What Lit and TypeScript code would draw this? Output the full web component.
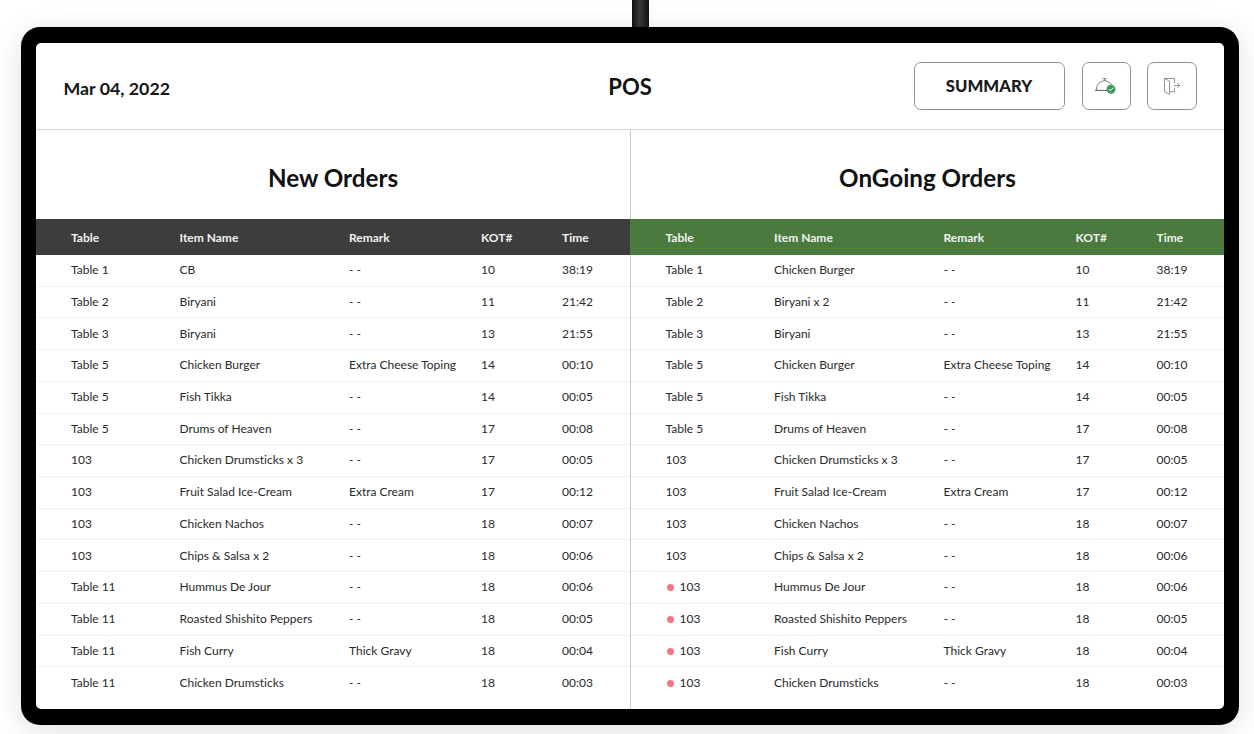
import { LitElement, html, css } from "lit";
import { customElement } from "lit/decorators.js";

type Row = [string, string, string, string, string];
const leftRows: Row[] = [
  ["Table 1", "CB", "- -", "10", "38:19"],
  ["Table 2", "Biryani", "- -", "11", "21:42"],
  ["Table 3", "Biryani", "- -", "13", "21:55"],
  ["Table 5", "Chicken Burger", "Extra Cheese Toping", "14", "00:10"],
  ["Table 5", "Fish Tikka", "- -", "14", "00:05"],
  ["Table 5", "Drums of Heaven", "- -", "17", "00:08"],
  ["103", "Chicken Drumsticks x 3", "- -", "17", "00:05"],
  ["103", "Fruit Salad Ice-Cream", "Extra Cream", "17", "00:12"],
  ["103", "Chicken Nachos", "- -", "18", "00:07"],
  ["103", "Chips & Salsa x 2", "- -", "18", "00:06"],
  ["Table 11", "Hummus De Jour", "- -", "18", "00:06"],
  ["Table 11", "Roasted Shishito Peppers", "- -", "18", "00:05"],
  ["Table 11", "Fish Curry", "Thick Gravy", "18", "00:04"],
  ["Table 11", "Chicken Drumsticks", "- -", "18", "00:03"],
];
const rightRows: Row[] = leftRows.map((r, i) => {
  const c = [...r] as Row;
  if (i === 0) c[1] = "Chicken Burger";
  if (i === 1) c[1] = "Biryani x 2";
  if (i >= 10) c[0] = "103";
  return c;
});

@customElement("app-root")
export class AppRoot extends LitElement {
  static styles = css`
    :host {
      display: block;
      width: 1254px;
      height: 734px;
      overflow: hidden;
      background: #fff;
      font-family: "Lato", "Liberation Sans", sans-serif;
      font-variant-ligatures: none;
      color: #1d1d1d;
    }
    .stand {
      width: 17px;
      height: 27px;
      margin-left: 632px;
      background: linear-gradient(90deg, #111 0%, #3a3a3a 45%, #111 100%);
    }
    .frame {
      width: 1218px;
      height: 698px;
      margin-left: 20.5px;
      box-sizing: border-box;
      padding: 16px 15px 16px 15.5px;
      background: #000;
      border-radius: 19px;
      box-shadow: 0 5px 30px rgba(0, 0, 0, 0.12);
    }
    .screen {
      height: 100%;
      background: #fff;
      border-radius: 5px;
      overflow: hidden;
      display: flex;
      flex-direction: column;
    }
    .top {
      height: 87px;
      flex: none;
      box-sizing: border-box;
      border-bottom: 1px solid #d8d8d8;
      display: grid;
      grid-template-columns: 1fr auto 1fr;
      align-items: center;
      padding: 0 27px 0 27.5px;
    }
    .date {
      font-size: 17.8px;
      font-weight: 700;
      color: #161616;
      padding-top: 3px;
    }
    .pos {
      font-size: 22px;
      font-weight: 700;
      color: #111;
    }
    .actions {
      display: flex;
      justify-content: flex-end;
      align-items: center;
    }
    .btn {
      box-sizing: border-box;
      height: 48px;
      border: 1px solid #8f9294;
      border-radius: 7px;
      display: flex;
      align-items: center;
      justify-content: center;
      background: #fff;
    }
    .summary {
      width: 151px;
      font-size: 16.7px;
      font-weight: 900;
      color: #1a1a1a;
    }
    .icon1 {
      width: 49px;
      margin-left: 17px;
    }
    .icon2 {
      width: 50px;
      margin-left: 16px;
    }
    .panes {
      flex: 1;
      display: grid;
      grid-template-columns: 594px 594px;
      min-height: 0;
    }
    .pane {
      display: flex;
      flex-direction: column;
      min-width: 0;
    }
    .pane + .pane {
      border-left: 1px solid #c9c9c9;
    }
    .title {
      height: 89px;
      flex: none;
      box-sizing: border-box;
      padding-top: 6px;
      display: flex;
      align-items: center;
      justify-content: center;
      font-size: 24.2px;
      font-weight: 700;
      color: #111;
    }
    .cols {
      display: grid;
      grid-template-columns: 108.5px 169.5px 132px 81px 1fr;
      padding-left: 35px;
      align-items: center;
    }
    .pane + .pane .row {
      padding-left: 34.5px;
    }
    .head {
      height: 36px;
      flex: none;
      color: #f2f2f2;
      font-size: 12px;
      font-weight: 700;
    }
    .head.dark {
      background: #3d3d3d;
    }
    .head.green {
      background: #4a7a3e;
      margin-left: -1px;
      padding-left: 35.5px;
    }
    .row {
      height: 31.72px;
      box-sizing: border-box;
      padding-bottom: 1.5px;
      border-bottom: 1px solid #f3f3f3;
      font-size: 12px;
      color: #2a2a2a;
    }
    .row:last-child {
      border-bottom: 0;
    }
    .dot {
      display: inline-block;
      width: 7px;
      height: 7px;
      border-radius: 50%;
      background: #f07878;
      margin: 0 6px 0 1px;
      vertical-align: 0;
    }
  `;

  private renderPane(title: string, headClass: string, rows: Row[], dots: boolean) {
    return html`<div class="pane">
      <div class="title">${title}</div>
      <div class="head cols ${headClass}">
        <span>Table</span><span>Item Name</span><span>Remark</span><span>KOT#</span><span>Time</span>
      </div>
      <div>
        ${rows.map(
          (r, i) => html`<div class="row cols">
            <span>${dots && i >= 10 ? html`<i class="dot"></i>` : ""}${r[0]}</span>
            <span>${r[1]}</span><span>${r[2]}</span><span>${r[3]}</span><span>${r[4]}</span>
          </div>`
        )}
      </div>
    </div>`;
  }

  render() {
    return html`
      <div class="stand"></div>
      <div class="frame">
        <div class="screen">
          <div class="top">
            <div class="date">Mar 04, 2022</div>
            <div class="pos">POS</div>
            <div class="actions">
              <div class="btn summary">SUMMARY</div>
              <div class="btn icon1">
                <svg width="24" height="20" viewBox="0 0 24 20" fill="none">
                  <path d="M9 2.6h3.2M10.6 2.6v2" stroke="#666" stroke-width="0.8" stroke-linecap="round"/>
                  <path d="M2.4 14C2.4 8.4 6 4.8 10.6 4.8c3.2 0 5.8 1.6 7 4.2" stroke="#666" stroke-width="0.8"/>
                  <path d="M1.4 14.4h11.2" stroke="#444" stroke-width="0.9" stroke-linecap="round"/>
                  <circle cx="17" cy="13.2" r="4.5" fill="#3e9a62"/>
                  <path d="M15 13.3l1.4 1.4 2.6-2.7" stroke="#fff" stroke-width="1" stroke-linecap="round" stroke-linejoin="round"/>
                </svg>
              </div>
              <div class="btn icon2">
                <svg width="20" height="20" viewBox="0 0 20 20" fill="none">
                  <path d="M12.5 7V2.5H2.5v13.2l5 2.6V5.1l-5-2.6" stroke="#777" stroke-width="0.8" stroke-linejoin="round"/>
                  <path d="M7.5 15.7h5V12" stroke="#777" stroke-width="0.8"/>
                  <path d="M12.5 9.6h5M15.4 7.4l2.3 2.2-2.3 2.2" stroke="#777" stroke-width="0.8" stroke-linecap="round" stroke-linejoin="round"/>
                </svg>
              </div>
            </div>
          </div>
          <div class="panes">
            ${this.renderPane("New Orders", "dark", leftRows, false)}
            ${this.renderPane("OnGoing Orders", "green", rightRows, true)}
          </div>
        </div>
      </div>
    `;
  }
}
